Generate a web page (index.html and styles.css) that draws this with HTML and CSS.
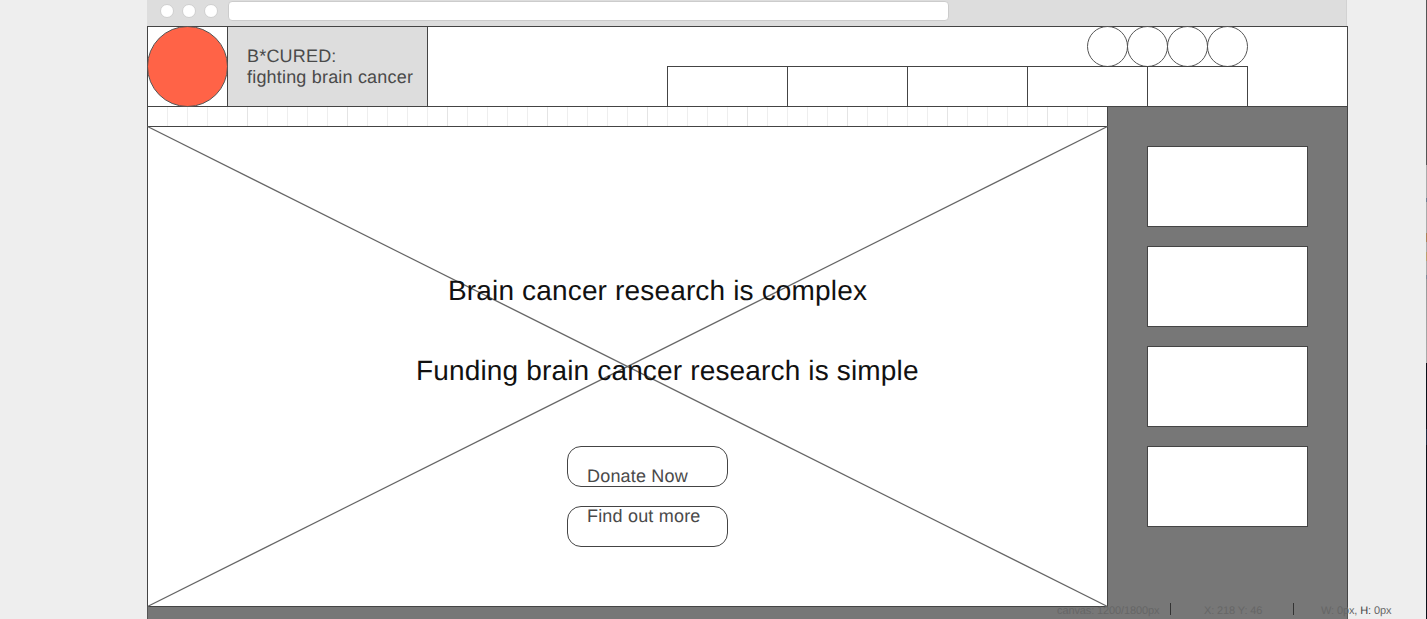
FILE: index.html
```html
<!DOCTYPE html>
<html lang="en">
<head>
    <meta charset="UTF-8">
    <title>B*CURED wireframe</title>
    <link rel="stylesheet" href="styles.css">
</head>
<body>
    <div class="canvas">
        <div class="chrome">
            <span class="dot"></span>
            <span class="dot"></span>
            <span class="dot"></span>
            <span class="address"></span>
        </div>

        <header class="header">
            <div class="logo-cell"><span class="logo"></span></div>
            <div class="title-cell">B*CURED:<br>fighting brain cancer</div>
            <div class="nav-area">
                <div class="socials">
                    <span class="social"></span>
                    <span class="social"></span>
                    <span class="social"></span>
                    <span class="social"></span>
                </div>
                <nav class="tabs">
                    <span class="tab"></span>
                    <span class="tab"></span>
                    <span class="tab"></span>
                    <span class="tab"></span>
                    <span class="tab tab-last"></span>
                </nav>
            </div>
        </header>

        <div class="main">
            <div class="left">
                <div class="ruler"></div>
                <section class="hero">
                    <svg class="cross" viewBox="0 0 961 481">
                        <line x1="0.5" y1="0.5" x2="960.5" y2="480.5"></line>
                        <line x1="960.5" y1="0.5" x2="0.5" y2="480.5"></line>
                    </svg>
                    <h2 class="line line-one">Brain cancer research is complex</h2>
                    <h2 class="line line-two">Funding brain cancer research is simple</h2>
                    <a class="btn btn-donate">Donate Now</a>
                    <a class="btn btn-more">Find out more</a>
                </section>
            </div>
            <aside class="sidebar">
                <div class="card"></div>
                <div class="card"></div>
                <div class="card"></div>
                <div class="card"></div>
            </aside>
        </div>
        <div class="footer"></div>
    </div>

    <div class="status">
        <span class="status-item status-canvas">canvas: 1200/1800px</span>
        <span class="status-item status-pos">X: 218 Y: 46</span>
        <span class="status-item status-size">W: 0px, <b>H:</b> 0px</span>
    </div>
    <div class="edge"></div>
</body>
</html>
```

FILE: styles.css
```css
html, body {
    margin: 0;
    height: 619px;
    overflow: hidden;
}

body {
    background-color: #eeeeee;
    font-family: "Liberation Sans", Arial, sans-serif;
    text-rendering: geometricPrecision;
    position: relative;
}

.canvas {
    width: 1201px;
    margin-left: 147px;
    box-sizing: border-box;
}

/* browser mock */
.chrome {
    width: 1200px;
    height: 26px;
    box-sizing: border-box;
    background-color: #dddddd;
    border-right: 1px solid #d2d2d2;
    display: flex;
    align-items: flex-start;
    padding: 1px 0 0 13px;
}

.dot {
    width: 12px;
    height: 12px;
    margin: 3px 8px 0 0;
    border-radius: 50%;
    background-color: #fff;
    border: 1px solid #cfcfcf;
}

.address {
    width: 721px;
    height: 20px;
    box-sizing: border-box;
    margin-left: 2px;
    background-color: #fff;
    border: 1px solid #cccccc;
    border-radius: 4px;
}

/* header */
.header {
    height: 81px;
    box-sizing: border-box;
    display: flex;
    background-color: #fff;
    border: 1px solid #444;
}

.logo-cell {
    width: 79px;
    height: 79px;
    flex: none;
    position: relative;
}

.logo {
    position: absolute;
    left: -1px;
    top: -1px;
    width: 81px;
    height: 81px;
    box-sizing: border-box;
    border-radius: 50%;
    background-color: #ff6347;
    border: 1px solid #555;
}

.title-cell {
    width: 201px;
    flex: none;
    box-sizing: border-box;
    background-color: #dddddd;
    border-left: 1px solid #444;
    border-right: 1px solid #444;
    padding: 19px 0 0 19px;
    color: #4a4a4a;
    font-size: 18px;
    line-height: 21px;
    letter-spacing: 0.19px;
}

.nav-area {
    flex: 1;
    display: flex;
    flex-direction: column;
    align-items: flex-end;
    padding-right: 99px;
}

.socials {
    display: flex;
    height: 39px;
    flex: none;
}

.social {
    width: 41px;
    height: 41px;
    box-sizing: border-box;
    margin: -1px -1px 0 0;
    border-radius: 50%;
    border: 1px solid #555;
}

.social:last-child {
    margin-right: 0;
}

.tabs {
    display: flex;
    height: 40px;
    box-sizing: border-box;
    border-top: 1px solid #444;
    border-right: 1px solid #444;
}

.tab {
    width: 120px;
    box-sizing: border-box;
    border-left: 1px solid #444;
}

.tab-last {
    width: 100px;
}

/* main area */
.main {
    display: flex;
    height: 500px;
}

.left {
    width: 960px;
    flex: none;
}

.ruler {
    height: 19px;
    box-sizing: border-box;
    background-color: #fff;
    border-left: 1px solid #444;
    background-image:
        repeating-linear-gradient(90deg, transparent 0, transparent 99px, #e4e4e4 99px, #e4e4e4 100px),
        repeating-linear-gradient(90deg, transparent 0, transparent 19px, #eeeeee 19px, #eeeeee 20px);
}

.hero {
    position: relative;
    height: 481px;
    box-sizing: border-box;
    background-color: #fff;
    border: 1px solid #444;
    border-right: 0;
}

.cross {
    position: absolute;
    left: -1px;
    top: -1px;
    width: 961px;
    height: 481px;
}

.cross line {
    stroke: #666;
    stroke-width: 1.2;
}

.line {
    position: absolute;
    margin: 0;
    font-weight: 400;
    font-size: 28px;
    line-height: 32px;
    letter-spacing: 0.16px;
    color: #111;
    white-space: nowrap;
}

.line-one {
    left: 300px;
    top: 148px;
}

.line-two {
    left: 268px;
    top: 228px;
}

.btn {
    position: absolute;
    left: 419px;
    width: 161px;
    height: 41px;
    box-sizing: border-box;
    border: 1px solid #444;
    border-radius: 14px;
    background-color: #fff;
    color: #4a4a4a;
    font-size: 18px;
    line-height: 19px;
    letter-spacing: 0.19px;
    padding-left: 19px;
}

.btn-donate {
    top: 319px;
    padding-top: 20px;
}

.btn-more {
    top: 379px;
}

.sidebar {
    width: 241px;
    height: 501px;
    margin-top: -1px;
    flex: none;
    box-sizing: border-box;
    background-color: #777777;
    border: 1px solid #444;
    border-bottom: 0;
    padding: 39px 39px 0 39px;
    display: flex;
    flex-direction: column;
    gap: 19px;
}

.card {
    height: 81px;
    flex: none;
    background-color: #fff;
    border: 1px solid #444;
    box-sizing: border-box;
}

.footer {
    height: 13px;
    background-color: #777777;
    border-left: 1px solid #555;
    border-right: 1px solid #555;
    box-sizing: border-box;
}

/* editor status bar, sits over the page */
.status {
    position: absolute;
    left: 0;
    top: 603px;
    width: 1426px;
    height: 16px;
    font-size: 11px;
    line-height: 16px;
    letter-spacing: -0.12px;
    color: #666;
}

.status b {
    font-weight: 400;
    color: #444;
}

.status-item {
    position: absolute;
    top: 0;
    white-space: nowrap;
}

.status-canvas {
    left: 1057px;
    width: 113px;
    height: 12px;
    border-right: 1px solid #333;
}

.status-pos {
    left: 1204px;
    width: 89px;
    height: 12px;
    border-right: 1px solid #333;
}

.status-size {
    left: 1321px;
}

.edge {
    position: absolute;
    right: 0;
    top: 0;
    width: 1px;
    height: 619px;
    background-image: linear-gradient(180deg,
        #555 0, #555 165px,
        #aaa 165px, #aaa 198px,
        #6d7f92 198px, #6d7f92 202px,
        #aaa 202px, #aaa 233px,
        #a98258 233px, #a98258 242px,
        #aaa 242px, #aaa 252px,
        #b99f6f 252px, #b99f6f 261px,
        #aaa 261px, #aaa 275px,
        #7d8a98 275px, #7d8a98 279px,
        #999 279px, #aaa 363px,
        #0b0f18 363px, #0b0f18 429px,
        #1c2b40 429px, #1c2b40 445px,
        #0b0f18 445px, #0b0f18 619px);
}
```
